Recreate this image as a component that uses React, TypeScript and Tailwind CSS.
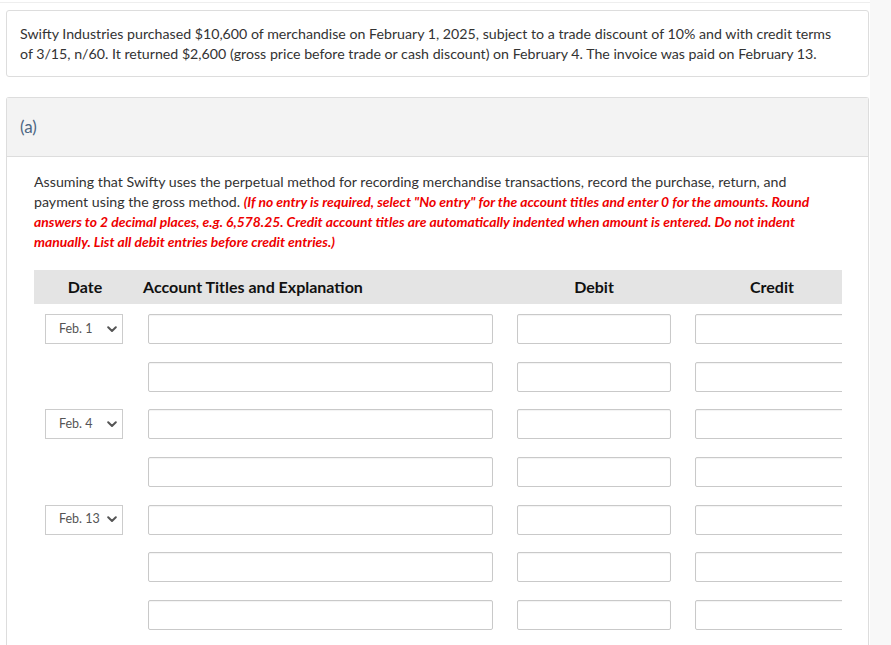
import React from "react";

const rows: (string | null)[] = ["Feb. 1", null, "Feb. 4", null, "Feb. 13", null, null];

function Chevron() {
  return (
    <svg width="10" height="7" viewBox="0 0 10 7" className="shrink-0">
      <path d="M1.2 1.3 L5 5 L8.8 1.3" fill="none" stroke="#555" strokeWidth="2" strokeLinecap="round" strokeLinejoin="round" />
    </svg>
  );
}

function Field({ w }: { w: string }) {
  return <div className={`h-[30px] ${w} border border-[#c9c9c9] rounded-[2px] bg-white shadow-[inset_0_1px_1px_rgba(0,0,0,0.05)]`} />;
}

export default function App() {
  return (
    <div className="flex w-[891px] h-[645px] overflow-hidden bg-white text-[#333]" style={{ fontFamily: "Lato, 'Noto Sans', sans-serif" }}>
      <div className="w-[870px] shrink-0">
        <div className="h-[3px] border-b border-[#eeeeee]" />
        <div className="pl-[6px] pr-[1px]">
          <div className="mt-[7px] border border-[#dddddd] rounded-[3px] pl-[13px] pr-[24px] pt-[13px] pb-[12px] text-[14.2px] leading-[20px]">
            Swifty Industries purchased $10,600 of merchandise on February 1, 2025, subject to a trade discount of 10% and with credit terms of 3/15, n/60. It returned $2,600 (gross price before trade or cash discount) on February 4. The invoice was paid on February 13.
          </div>

          <div className="mt-[20px] border border-b-0 border-[#dddddd] rounded-t-[3px] h-[560px]">
            <div className="h-[59px] bg-[#f3f3f3] border-b border-[#dddddd] flex items-center pl-[13px] text-[17px] text-[#4d6682]">
              (a)
            </div>
            <div className="pl-[27px] pr-[27px] pt-[15px]">
              <p className="text-[14.2px] leading-[20px] text-[#333]">
                Assuming that Swifty uses the perpetual method for recording merchandise transactions, record the purchase, return, and payment using the gross method.{" "}
                <span className="text-[#ee0000] font-bold italic text-[13.9px]">
                  (If no entry is required, select "No entry" for the account titles and enter 0 for the amounts. Round answers to 2 decimal places, e.g. 6,578.25. Credit account titles are automatically indented when amount is entered. Do not indent manually. List all debit entries before credit entries.)
                </span>
              </p>

              <div className="mt-[18px] w-[808px] overflow-hidden">
                <div className="w-[827px]">
                  <div className="grid grid-cols-[102px_369px_178px_178px] h-[34px] bg-[#e4e4e4] items-center text-[16px] font-bold text-[#111]">
                    <div className="text-center">Date</div>
                    <div className="pl-[7px]">Account Titles and Explanation</div>
                    <div className="text-center">Debit</div>
                    <div className="text-center">Credit</div>
                  </div>
                  <div className="pt-[10px] flex flex-col gap-y-[17.7px]">
                    {rows.map((d, i) => (
                      <div key={i} className="grid grid-cols-[102px_369px_178px_178px] items-center">
                        <div className="pl-[11px]">
                          {d ? (
                            <div className="w-[78px] h-[30px] border border-[#cccccc] bg-white flex items-center justify-between pl-[13px] pr-[5px] text-[12.5px] text-[#555]">
                              <span>{d}</span>
                              <Chevron />
                            </div>
                          ) : null}
                        </div>
                        <div className="px-[12px]"><Field w="w-full" /></div>
                        <div className="px-[12px]"><Field w="w-full" /></div>
                        <div className="px-[12px]"><Field w="w-full" /></div>
                      </div>
                    ))}
                  </div>
                </div>
              </div>
            </div>
          </div>
        </div>
      </div>
      <div className="flex-1 bg-[#f8f8f8]" />
    </div>
  );
}
